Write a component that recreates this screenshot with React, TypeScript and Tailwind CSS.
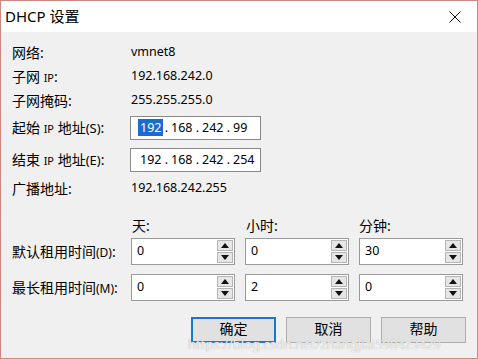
import React from "react";

/* -------------------- PARTS -------------------- */

const FONT = {
  fontFamily: '"Noto Sans", "Noto Sans CJK SC", sans-serif',
};

function InfoRow({ label, value }: { label: React.ReactNode; value: string }) {
  return (
    <div className="flex h-[24px] items-center">
      <div className="w-[119px] shrink-0 text-[14px]">{label}</div>
      <div className="text-[12.5px]">{value}</div>
    </div>
  );
}

function IpBox({ parts, selectFirst }: { parts: string[]; selectFirst?: boolean }) {
  return (
    <div className="flex h-[24px] w-[131px] items-center border border-[#8a8a8a] bg-white pl-[9px] text-[12.5px]">
      {parts.map((p, i) => (
        <React.Fragment key={i}>
          {i > 0 && <span className="w-[9px] text-center">.</span>}
          <span className="w-[22px]">
            {i === 0 && selectFirst ? (
              <span className="-ml-[2px] bg-[#1a6ccf] px-[2px] leading-[18px] text-white">{p}</span>
            ) : (
              p
            )}
          </span>
        </React.Fragment>
      ))}
    </div>
  );
}

function Arrow({ up }: { up?: boolean }) {
  return (
    <svg width="8" height="5" viewBox="0 0 8 5">
      <path d={up ? "M0 5 L4 0 L8 5 Z" : "M0 0 L8 0 L4 5 Z"} fill="#111" />
    </svg>
  );
}

function Spinner({ value }: { value: string }) {
  return (
    <div className="flex h-[27px] w-[104px] border border-[#9a9a9a] bg-white">
      <div className="flex flex-1 items-center pl-[5px] text-[12.5px]">{value}</div>
      <div className="flex w-[18px] flex-col gap-[1px] p-[1px]">
        <div className="flex flex-1 items-center justify-center border border-[#b5b5b5] bg-[#e6e6e6]">
          <Arrow up />
        </div>
        <div className="flex flex-1 items-center justify-center border border-[#b5b5b5] bg-[#e6e6e6]">
          <Arrow />
        </div>
      </div>
    </div>
  );
}

function Btn({ label, primary }: { label: string; primary?: boolean }) {
  return (
    <button
      className={
        "flex h-[26px] w-[85px] items-center justify-center bg-[#e1e1e1] pb-[3px] text-[14px] leading-[18px] text-black " +
        (primary ? "border-2 border-[#1877d2]" : "border border-[#adadad]")
      }
    >
      {label}
    </button>
  );
}

/* -------------------- COMPONENT -------------------- */
export default function App() {
  return (
    <div
      className="relative flex h-[359px] w-[478px] flex-col border border-[#cf867e] bg-[#f0f0f0] text-black"
      style={FONT}
    >
      {/* TITLE BAR */}
      <div className="flex h-[31px] shrink-0 items-center justify-between bg-white pl-[4px] pr-[16px]">
        <span className="text-[15px]">DHCP 设置</span>
        <svg width="12" height="12" viewBox="0 0 12 12">
          <path d="M0.5 0.5 L11.5 11.5 M11.5 0.5 L0.5 11.5" stroke="#111" strokeWidth="1" />
        </svg>
      </div>

      {/* FORM */}
      <div className="flex flex-col px-[11px] pt-[8px]">
        <InfoRow label="网络:" value="vmnet8" />
        <InfoRow
          label={
            <>
              子网 <span className="text-[11px]">IP</span>:
            </>
          }
          value="192.168.242.0"
        />
        <InfoRow label="子网掩码:" value="255.255.255.0" />

        <div className="mt-[4px] flex h-[24px] items-center">
          <div className="w-[118px] shrink-0 text-[14px]">
            起始 <span className="text-[11px]">IP</span> 地址<span className="text-[13px]">(S)</span>:
          </div>
          <IpBox parts={["192", "168", "242", "99"]} selectFirst />
        </div>
        <div className="mt-[8px] flex h-[24px] items-center">
          <div className="w-[118px] shrink-0 text-[14px]">
            结束 <span className="text-[11px]">IP</span> 地址<span className="text-[13px]">(E)</span>:
          </div>
          <IpBox parts={["192", "168", "242", "254"]} />
        </div>
        <div className="mt-[4px]">
          <InfoRow label="广播地址:" value="192.168.242.255" />
        </div>

        {/* LEASE TIMES */}
        <div className="mt-[14px] flex h-[22px] items-center text-[14px]">
          <div className="w-[120px] shrink-0" />
          <div className="w-[114px]">天:</div>
          <div className="w-[113px]">小时:</div>
          <div>分钟:</div>
        </div>
        <div className="mt-[2px] flex items-center">
          <div className="w-[119px] shrink-0 text-[14px]">
            默认租用时间<span className="text-[12px]">(D)</span>:
          </div>
          <div className="flex gap-[10px]">
            <Spinner value="0" />
            <Spinner value="0" />
            <Spinner value="30" />
          </div>
        </div>
        <div className="mt-[9px] flex items-center">
          <div className="w-[119px] shrink-0 text-[14px]">
            最长租用时间<span className="text-[12px]">(M)</span>:
          </div>
          <div className="flex gap-[10px]">
            <Spinner value="0" />
            <Spinner value="2" />
            <Spinner value="0" />
          </div>
        </div>

        {/* BUTTONS */}
        <div className="mt-[16px] flex justify-end gap-[10px]">
          <Btn label="确定" primary />
          <Btn label="取消" />
          <Btn label="帮助" />
        </div>
      </div>

      {/* WATERMARK */}
      <div className="pointer-events-none absolute left-[187px] top-[335px] text-[13px] leading-[16px] text-white/80 [text-shadow:0_0_1px_#9a9a9a]">
        https://blog.csdn.net/zhangjiai5984z3429
      </div>
    </div>
  );
}
